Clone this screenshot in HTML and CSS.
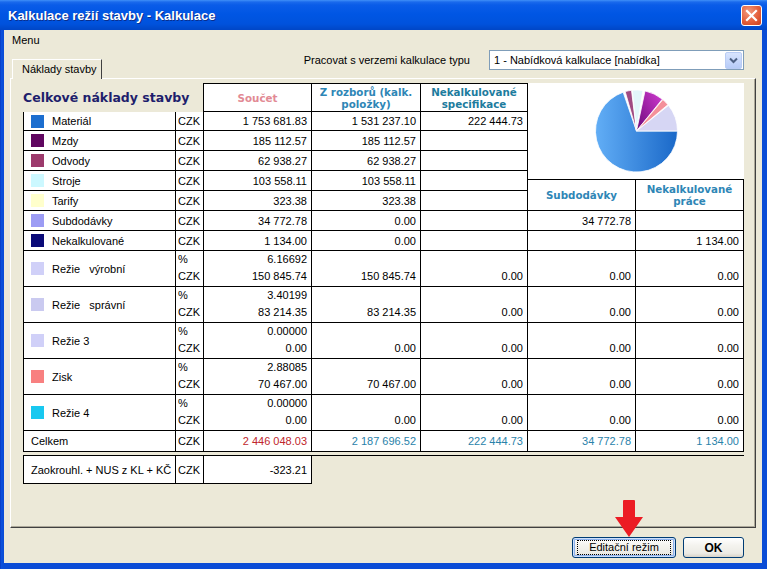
FILE: index.html
```html
<!DOCTYPE html>
<html lang="cs">
<head>
<meta charset="utf-8">
<title>Kalkulace režií stavby - Kalkulace</title>
<link rel="stylesheet" href="styles.css">
</head>
<body>
<div class="window">
  <div class="titlebar">
    <span class="title">Kalkulace režií stavby - Kalkulace</span>
    <span class="close"><svg width="13" height="13" viewBox="0 0 13 13"><path d="M2 2 L11 11 M11 2 L2 11" stroke="#fff" stroke-width="2.2" stroke-linecap="square"/></svg></span>
  </div>
  <div class="frame">
    <div class="client">
      <div class="menubar">Menu</div>
      <div class="toprow">
        <div class="tab">Náklady stavby</div>
        <div class="version">
          <span class="vlabel">Pracovat s verzemi kalkulace typu</span>
          <div class="select">
            <span class="seltext">1 - Nabídková kalkulace [nabídka]</span>
            <span class="selarrow"><svg width="9" height="7" viewBox="0 0 9 7"><path d="M1 1.5 L4.5 5 L8 1.5" fill="none" stroke="#4D6185" stroke-width="2"/></svg></span>
          </div>
        </div>
      </div>
      <div class="panel">
        <div class="sheet">
          <div class="top">
            <div class="left">
              <div class="hrow">
                <div class="sheet-title">Celkové náklady stavby</div>
                <div class="hcell first c3 pink">Součet</div>
                <div class="hcell c4 blue">Z rozborů (kalk.<br>položky)</div>
                <div class="hcell c5 teal">Nekalkulované<br>specifikace</div>
              </div>
              <div class="row r19">
                <div class="cell name"><i class="sw" style="background:#1C6ECF"></i>Materiál</div>
                <div class="cell czk">CZK</div>
                <div class="cell num c3">1 753 681.83</div>
                <div class="cell num c4">1 531 237.10</div>
                <div class="cell num c5">222 444.73</div>
              </div>
              <div class="row">
                <div class="cell name"><i class="sw" style="background:#600660"></i>Mzdy</div>
                <div class="cell czk">CZK</div>
                <div class="cell num c3">185 112.57</div>
                <div class="cell num c4">185 112.57</div>
                <div class="cell num c5"></div>
              </div>
              <div class="row">
                <div class="cell name"><i class="sw" style="background:#9C3A6C"></i>Odvody</div>
                <div class="cell czk">CZK</div>
                <div class="cell num c3">62 938.27</div>
                <div class="cell num c4">62 938.27</div>
                <div class="cell num c5"></div>
              </div>
              <div class="row">
                <div class="cell name"><i class="sw" style="background:#CCF8FF"></i>Stroje</div>
                <div class="cell czk">CZK</div>
                <div class="cell num c3">103 558.11</div>
                <div class="cell num c4">103 558.11</div>
                <div class="cell num c5"></div>
              </div>
              <div class="row">
                <div class="cell name"><i class="sw" style="background:#FFFFCC"></i>Tarify</div>
                <div class="cell czk">CZK</div>
                <div class="cell num c3">323.38</div>
                <div class="cell num c4">323.38</div>
                <div class="cell num c5"></div>
              </div>
            </div>
            <div class="right">
              <div class="pie">
                <svg width="216" height="96" viewBox="0 0 216 96">
                  <defs>
                    <linearGradient id="gblue" x1="0" y1="0" x2="1" y2="0">
                      <stop offset="0" stop-color="#62AEF6"/>
                      <stop offset="1" stop-color="#1A68C8"/>
                    </linearGradient>
                    <linearGradient id="gpurple" x1="0" y1="1" x2="1" y2="0">
                      <stop offset="0" stop-color="#6A0878"/>
                      <stop offset="1" stop-color="#D23CD2"/>
                    </linearGradient>
                  </defs>
                  <g stroke="#fff" stroke-width="0.8">
                    <path d="M108.5,48 L149.5,48 A41,41 0 1,1 95.15,9.23 Z" fill="url(#gblue)"/>
                    <path d="M108.5,48 L97.2,8.59 A41,41 0 0,1 103.5,7.31 Z" fill="#A04A82"/>
                    <path d="M108.5,48 L104.22,7.23 A41,41 0 0,1 114.91,7.5 Z" fill="#E2F6FA"/>
                    <path d="M108.5,48 L117.02,7.9 A41,41 0 0,1 134.3,16.14 Z" fill="url(#gpurple)"/>
                    <path d="M108.5,48 L134.85,16.59 A41,41 0 0,1 139.91,21.65 Z" fill="#F4909A"/>
                    <path d="M108.5,48 L140.5,22.4 A41,41 0 0,1 149.5,48 Z" fill="#D6D6F4"/>
                  </g>
                </svg>
              </div>
              <div class="hrow2">
                <div class="hcell c6 blue">Subdodávky</div>
                <div class="hcell c7 blue">Nekalkulované<br>práce</div>
              </div>
            </div>
          </div>
          <div class="body">
            <div class="row">
              <div class="cell name"><i class="sw" style="background:#9C9CF4"></i>Subdodávky</div>
              <div class="cell czk">CZK</div>
              <div class="cell num c3">34 772.78</div>
              <div class="cell num c4">0.00</div>
              <div class="cell num c5"></div>
              <div class="cell num c6">34 772.78</div>
              <div class="cell num c7"></div>
            </div>
            <div class="row">
              <div class="cell name"><i class="sw" style="background:#0A0A78"></i>Nekalkulované</div>
              <div class="cell czk">CZK</div>
              <div class="cell num c3">1 134.00</div>
              <div class="cell num c4">0.00</div>
              <div class="cell num c5"></div>
              <div class="cell num c6"></div>
              <div class="cell num c7">1 134.00</div>
            </div>
            <div class="row dbl">
              <div class="cell name"><i class="sw" style="background:#D0D0F8"></i><span class="pre">Režie   výrobní</span></div>
              <div class="cell czk two"><span>%</span><span>CZK</span></div>
              <div class="cell num c3 two"><span>6.16692</span><span>150 845.74</span></div>
              <div class="cell num c4">150 845.74</div>
              <div class="cell num c5">0.00</div>
              <div class="cell num c6">0.00</div>
              <div class="cell num c7">0.00</div>
            </div>
            <div class="row dbl">
              <div class="cell name"><i class="sw" style="background:#CACAF0"></i><span class="pre">Režie   správní</span></div>
              <div class="cell czk two"><span>%</span><span>CZK</span></div>
              <div class="cell num c3 two"><span>3.40199</span><span>83 214.35</span></div>
              <div class="cell num c4">83 214.35</div>
              <div class="cell num c5">0.00</div>
              <div class="cell num c6">0.00</div>
              <div class="cell num c7">0.00</div>
            </div>
            <div class="row dbl">
              <div class="cell name"><i class="sw" style="background:#D0D0F8"></i>Režie 3</div>
              <div class="cell czk two"><span>%</span><span>CZK</span></div>
              <div class="cell num c3 two"><span>0.00000</span><span>0.00</span></div>
              <div class="cell num c4">0.00</div>
              <div class="cell num c5">0.00</div>
              <div class="cell num c6">0.00</div>
              <div class="cell num c7">0.00</div>
            </div>
            <div class="row dbl">
              <div class="cell name"><i class="sw" style="background:#F88080"></i>Zisk</div>
              <div class="cell czk two"><span>%</span><span>CZK</span></div>
              <div class="cell num c3 two"><span>2.88085</span><span>70 467.00</span></div>
              <div class="cell num c4">70 467.00</div>
              <div class="cell num c5">0.00</div>
              <div class="cell num c6">0.00</div>
              <div class="cell num c7">0.00</div>
            </div>
            <div class="row dbl">
              <div class="cell name"><i class="sw" style="background:#18C8F0"></i>Režie 4</div>
              <div class="cell czk two"><span>%</span><span>CZK</span></div>
              <div class="cell num c3 two"><span>0.00000</span><span>0.00</span></div>
              <div class="cell num c4">0.00</div>
              <div class="cell num c5">0.00</div>
              <div class="cell num c6">0.00</div>
              <div class="cell num c7">0.00</div>
            </div>
            <div class="row r21">
              <div class="cell name plain">Celkem</div>
              <div class="cell czk">CZK</div>
              <div class="cell num c3 red">2 446 048.03</div>
              <div class="cell num c4 tot">2 187 696.52</div>
              <div class="cell num c5 tot">222 444.73</div>
              <div class="cell num c6 tot">34 772.78</div>
              <div class="cell num c7 tot">1 134.00</div>
            </div>
          </div>
          <div class="row boxed">
            <div class="cell name plain">Zaokrouhl. + NUS z KL + KČ</div>
            <div class="cell czk">CZK</div>
            <div class="cell num c3">-323.21</div>
          </div>
        </div>
      </div>
      <div class="buttons">
        <div class="btn default"><span class="focus">Editační režim</span></div>
        <div class="btn ok">OK</div>
      </div>
    </div>
  </div>
  <svg class="arrow" width="28" height="38" viewBox="0 0 28 38"><path d="M8 1 Q8 0 9 0 L19 0 Q20 0 20 1 L20 17 L28 17 L14 37 L0 17 L8 17 Z" fill="#EC1C24"/></svg>
</div>
</body>
</html>
```

FILE: styles.css
```css
* { box-sizing: border-box; }
html, body { margin: 0; padding: 0; }
body {
  width: 767px;
  height: 569px;
  overflow: hidden;
  font-family: "Liberation Sans", Arial, sans-serif;
  font-size: 11px;
  color: #000;
  background: #0A4FD8;
}
.window {
  position: relative;
  width: 767px;
  height: 569px;
  display: flex;
  flex-direction: column;
  background: linear-gradient(to right, #0831B8 0, #0C52DC 1px, #0A4CD6 4px);
}
.titlebar {
  height: 30px;
  flex: none;
  display: flex;
  align-items: center;
  justify-content: space-between;
  padding: 0 5px 0 8px;
  background: linear-gradient(to bottom, #4090F8 0, #1A6AEC 2px, #0A5CE8 5px, #0056E4 14px, #0052DC 24px, #0046C6 30px);
}
.title {
  color: #fff;
  font-weight: bold;
  font-size: 13px;
  text-shadow: 1px 1px 0 #0A2E8C;
}
.close {
  width: 21px;
  height: 21px;
  margin-top: 1px;
  border: 1px solid #fff;
  border-radius: 3px;
  background: radial-gradient(circle at 35% 30%, #F29A7E 0, #E4603C 55%, #C83E1E 100%);
  display: flex;
  align-items: center;
  justify-content: center;
}
.frame {
  flex: 1;
  display: flex;
  padding: 0 5px 6px 4px;
}
.client {
  flex: 1;
  background: #ECE9D8;
  display: flex;
  flex-direction: column;
}
.menubar {
  height: 20px;
  line-height: 20px;
  padding-left: 8px;
}
.toprow {
  height: 28px;
  display: flex;
  align-items: flex-start;
}
.tab {
  position: relative;
  z-index: 1;
  align-self: flex-end;
  margin-left: 8px;
  margin-bottom: -1px;
  width: 90px;
  height: 20px;
  line-height: 18px;
  padding-left: 9px;
  background: #ECE9D8;
  border-top: 1px solid #fff;
  border-left: 1px solid #fff;
  border-right: 1px solid #404040;
  white-space: nowrap;
}
.version {
  margin-left: auto;
  margin-right: 18px;
  display: flex;
  align-items: center;
  gap: 19px;
  height: 20px;
}
.select {
  width: 255px;
  height: 20px;
  border: 1px solid #7F9DB9;
  background: #fff;
  display: flex;
  align-items: center;
  justify-content: space-between;
  padding: 0 1px 0 4px;
}
.selarrow {
  width: 17px;
  height: 17px;
  border: 1px solid #B9CCF4;
  border-radius: 2px;
  background: linear-gradient(to bottom, #D8E4FE, #B6CBF8);
  display: flex;
  align-items: center;
  justify-content: center;
}
.panel {
  margin: 0 6px;
  height: 450px;
  border-top: 1px solid #fff;
  border-left: 1px solid #fff;
  border-right: 1px solid #404040;
  border-bottom: 1px solid #404040;
  box-shadow: inset -1px -1px 0 #ACA899;
  padding: 4px 0 0 12px;
}
.sheet { width: 721px; }
.top { display: flex; height: 128px; }
.left { width: 505px; display: flex; flex-direction: column; }
.right { width: 216px; display: flex; flex-direction: column; }
.hrow { display: flex; height: 29px; }
.sheet-title {
  width: 180px;
  display: flex;
  align-items: center;
  font-family: "DejaVu Sans", Verdana, sans-serif;
  font-weight: bold;
  font-size: 12.5px;
  color: #1E1E6C;
  white-space: nowrap;
}
.hcell {
  background: #fff;
  border-top: 1px solid #000;
  border-bottom: 1px solid #000;
  border-right: 1px solid #000;
  display: flex;
  align-items: center;
  justify-content: center;
  text-align: center;
  font-family: "DejaVu Sans", Verdana, sans-serif;
  font-weight: bold;
  font-size: 10.3px;
  line-height: 12px;
}
.hcell.first { border-left: 1px solid #000; }
.hrow .c3 { width: 109px; }
.hrow .c4 { width: 109px; }
.hrow .c5 { width: 107px; }
.pink { color: #E28A94; }
.blue { color: #2E86B6; }
.teal { color: #1D7C9E; }
.pie { height: 96px; background: #fff; }
.pie svg { display: block; }
.hrow2 { display: flex; height: 32px; }
.hrow2 .hcell { width: 108px; }

.row {
  display: flex;
  height: 20px;
  border-left: 1px solid #000;
}
.row.r19 { height: 19px; }
.row.r21 { height: 21px; }
.row.dbl { height: 36px; }
.cell {
  background: #fff;
  border-right: 1px solid #000;
  border-bottom: 1px solid #000;
  display: flex;
  align-items: center;
  white-space: nowrap;
}
.cell.name { width: 152px; padding-left: 7px; }
.cell.name.plain { padding-left: 7px; }
.pre { white-space: pre; }
.sw {
  display: inline-block;
  width: 13px;
  height: 13px;
  margin-right: 8px;
  flex: none;
}
.cell.czk { width: 28px; padding-left: 2px; }
.cell.num { justify-content: flex-end; padding-right: 4px; }
.c3 { width: 108px; }
.c4 { width: 109px; }
.c5 { width: 107px; }
.c6 { width: 108px; }
.c7 { width: 108px; }
.row.dbl .cell.num { align-items: flex-end; line-height: 17px; padding-bottom: 1px; }
.row.dbl .cell.two {
  flex-direction: column;
  justify-content: flex-start;
  line-height: 17px;
  padding-bottom: 0;
}
.row.dbl .cell.czk.two { align-items: flex-start; }
.row.dbl .cell.num.two { align-items: flex-end; }
.red { color: #C0262C; }
.tot { color: #2A82AA; }
.row.boxed {
  margin-top: 3px;
  height: 29px;
  border-top: 1px solid #000;
}
.buttons {
  margin-top: 9px;
  display: flex;
  justify-content: flex-end;
  gap: 7px;
  padding-right: 18px;
}
.btn {
  height: 21px;
  border: 1px solid #003C74;
  border-radius: 3px;
  background: linear-gradient(to bottom, #FFFFFF 0, #F4F3EE 40%, #ECEBE5 80%, #D8D3C8 100%);
  display: flex;
  align-items: center;
  justify-content: center;
}
.btn.default {
  width: 104px;
  box-shadow: inset 0 0 0 1px #CEE0FB, inset 0 0 0 2px #8EB2EC;
}
.focus {
  border: 1px dotted #000;
  padding: 0 11px;
  line-height: 13px;
}
.btn.ok {
  width: 61px;
  font-weight: bold;
  font-size: 12px;
}
.arrow {
  position: absolute;
  left: 615px;
  top: 500px;
}
```
